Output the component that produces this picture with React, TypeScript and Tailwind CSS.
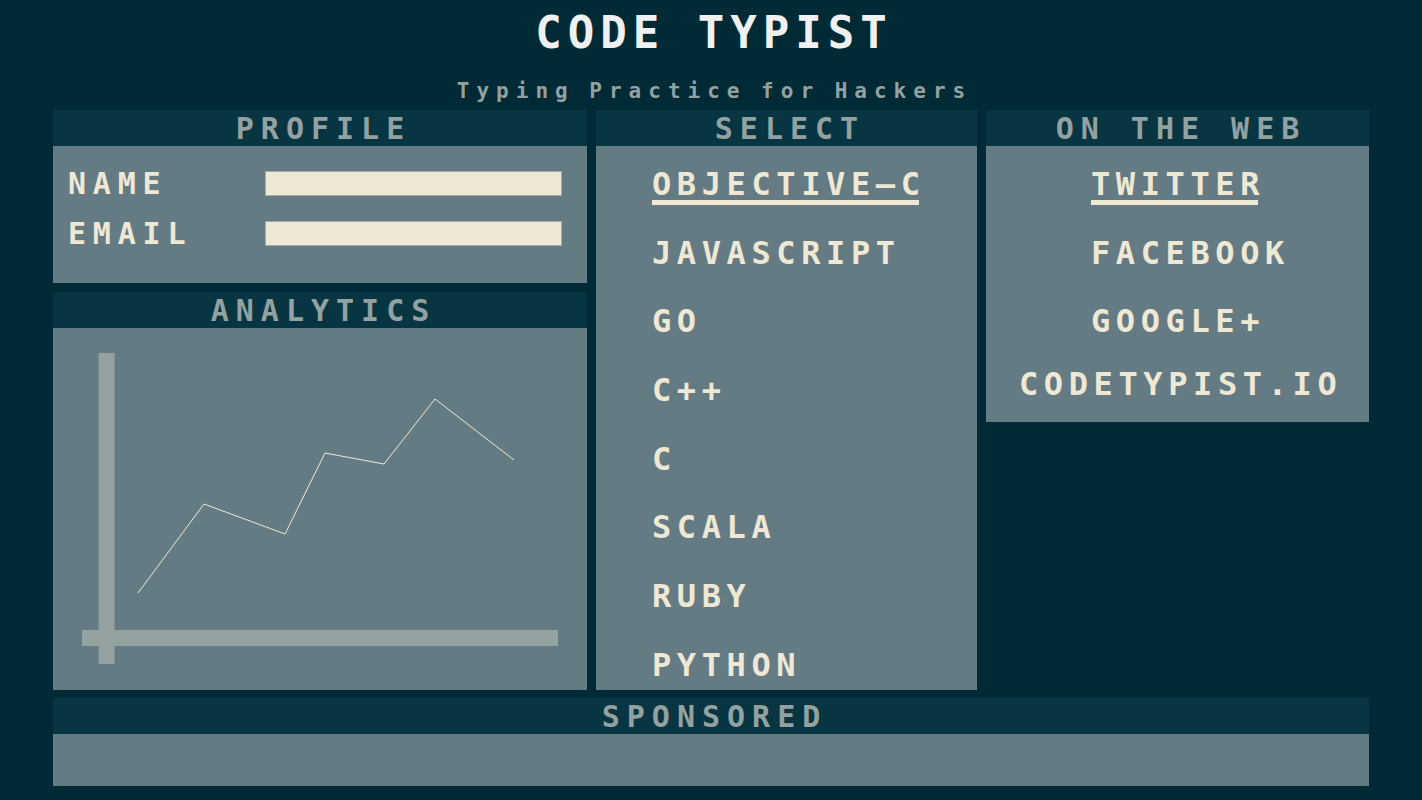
import type { ReactNode } from "react";

const languages = [
  "OBJECTIVE–C",
  "JAVASCRIPT",
  "GO",
  "C++",
  "C",
  "SCALA",
  "RUBY",
  "PYTHON",
];

const links = ["TWITTER", "FACEBOOK", "GOOGLE+"];

const itemText =
  "text-[32px] leading-[40px] tracking-[5.6px] font-bold text-[#eee8d5]";

// underline that stops at the last glyph, not after its letter spacing
const activeItem =
  "relative after:absolute after:left-0 after:right-[7px] after:top-[36px] after:h-[5px] after:bg-[#eee8d5]";

function PanelHeader({ children }: { children: ReactNode }) {
  return (
    <div className="h-[36px] bg-[#073642] flex items-center justify-center pt-[2px] pl-[7px] text-[30px] leading-none tracking-[7px] font-bold text-[#93a1a1]">
      {children}
    </div>
  );
}

function Chart() {
  const points = "85,265 151,176 232,206 272,125 331,136 382,71 461,132";
  return (
    <svg width="534" height="362" viewBox="0 0 534 362" className="block">
      <rect x="45.5" y="25" width="16" height="311" fill="#93a1a1" />
      <rect x="29" y="302" width="476" height="16" fill="#93a1a1" />
      <polyline points={points} fill="none" stroke="#eee8d5" strokeWidth="1" />
    </svg>
  );
}

export default function App() {
  return (
    <div
      className="min-h-screen bg-[#002b36] pt-[11px] pb-[14px]"
      style={{ fontFamily: '"DejaVu Sans Mono", "Liberation Mono", monospace' }}
    >
      {/* Title */}
      <h1 className="text-center pl-[6px] text-[44px] leading-none tracking-[6px] font-bold text-[#eef0f1]">
        CODE TYPIST
      </h1>
      <p className="mt-[26px] text-center pl-[7px] text-[21px] leading-none tracking-[7px] [word-spacing:-5px] font-bold text-[#93a1a1]">
        Typing Practice for Hackers
      </p>

      {/* Panels */}
      <div className="mt-[8px] mx-[53px] grid grid-cols-[534px_381px_383px] gap-x-[9px] items-start">
        <div className="flex flex-col gap-[9px]">
          <section>
            <PanelHeader>PROFILE</PanelHeader>
            <div className="h-[137px] bg-[#657b83] pl-[15px] pt-[22px] flex flex-col gap-[19px]">
              {["NAME", "EMAIL"].map((label) => (
                <div key={label} className="flex items-start">
                  <span className="mt-[1px] w-[197px] text-[30px] leading-none tracking-[6.8px] font-bold text-[#eee8d5]">
                    {label}
                  </span>
                  <input
                    type="text"
                    aria-label={label}
                    className="mt-[3px] w-[297px] h-[25px] bg-[#eee8d5] border border-[#a3aba6] outline-none"
                  />
                </div>
              ))}
            </div>
          </section>
          <section>
            <PanelHeader>ANALYTICS</PanelHeader>
            <div className="h-[362px] bg-[#657b83]">
              <Chart />
            </div>
          </section>
        </div>

        <section>
          <PanelHeader>SELECT</PanelHeader>
          <ul className="h-[544px] bg-[#657b83] pt-[18px] pl-[56px] flex flex-col items-start gap-[28.7px]">
            {languages.map((lang, i) => (
              <li key={lang} className={`${itemText} ${i === 0 ? activeItem : ""}`}>
                {lang}
              </li>
            ))}
          </ul>
        </section>

        <section>
          <PanelHeader>ON THE WEB</PanelHeader>
          <ul className="h-[276px] bg-[#657b83] pt-[18px] pl-[105px] flex flex-col items-start gap-[28.7px]">
            {links.map((link, i) => (
              <li key={link} className={`${itemText} ${i === 0 ? activeItem : ""}`}>
                {link}
              </li>
            ))}
            <li className={`-mt-[6px] -ml-[72px] ${itemText}`}>CODETYPIST.IO</li>
          </ul>
        </section>
      </div>

      {/* Sponsored */}
      <section className="mt-[8px] mx-[53px]">
        <PanelHeader>SPONSORED</PanelHeader>
        <div className="h-[52px] bg-[#657b83]" />
      </section>
    </div>
  );
}
